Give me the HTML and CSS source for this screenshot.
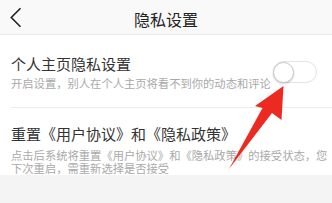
FILE: index.html
```html
<!DOCTYPE html>
<html lang="zh-CN">
<head>
<meta charset="utf-8">
<link rel="stylesheet" href="styles.css">
</head>
<body>
<div class="page">
  <header class="bar">
    <svg class="back" width="12" height="21" viewBox="0 0 12 21"><path d="M10.5 1.2 L1.3 10.5 L10.5 19.8" fill="none" stroke="#222" stroke-width="1.6"/></svg>
    <div class="bar-title">隐私设置</div>
  </header>
  <section class="list">
    <div class="item item-first">
      <div class="texts">
        <div class="title">个人主页隐私设置</div>
        <div class="desc">开启设置，别人在个人主页将看不到你的动态和评论</div>
      </div>
      <div class="switch"><span class="knob"></span></div>
    </div>
    <div class="item item-last">
      <div class="texts">
        <div class="title">重置《用户协议》和《隐私政策》</div>
        <div class="desc desc-wide">点击后系统将重置《用户协议》和《隐私政策》的接受状态，您下次重启，需重新选择是否接受</div>
      </div>
    </div>
  </section>
  <div class="rest"></div>
  <svg class="arrow" width="332" height="203" viewBox="0 0 332 203"><polygon points="283.5,86 281.5,120 272,113 229,169 262.5,108 255,106" fill="#ec2a22"/></svg>
</div>
</body>
</html>
```
FILE: styles.css
```css
html, body {
  margin: 0;
  padding: 0;
}
body {
  font-family: "Noto Sans CJK SC", "Noto Sans", sans-serif;
  background: #f4f4f4;
}
.page {
  position: relative;
  width: 332px;
  height: 203px;
  overflow: hidden;
  background: #f4f4f4;
}
.bar {
  height: 34px;
  background: #f9f9f9;
  border-bottom: 1px solid #e9e9e9;
  display: flex;
  align-items: center;
}
.back {
  margin-left: 10px;
}
.bar-title {
  flex: 1;
  text-align: center;
  font-size: 16px;
  line-height: 20px;
  color: #222;
  margin-left: -22px;
  padding-top: 4px;
}
.list {
  background: #fff;
  padding-left: 11px;
}
.item {
  display: flex;
  align-items: center;
}
.item-first {
  padding: 19px 15px 17px 0;
  border-bottom: 1px solid #ececec;
}
.item-last {
  padding: 16px 0 0 0;
}
.texts {
  flex: 1;
  min-width: 0;
}
.title {
  font-size: 15px;
  line-height: 20px;
  color: #333;
}
.desc {
  font-size: 11.3px;
  line-height: 13px;
  color: #a9a9a9;
  margin-top: 3px;
}
.desc-wide {
  margin-top: 5px;
}
.switch {
  width: 42px;
  height: 20px;
  border: 1px solid #e3e3e3;
  border-radius: 11px;
  background: #fff;
  display: flex;
  align-items: center;
}
.knob {
  width: 21px;
  height: 21px;
  border-radius: 50%;
  background: #fff;
  border: 1px solid #c9c9c9;
  box-shadow: 0 1px 2px rgba(0,0,0,0.2);
  margin-left: -1px;
  box-sizing: border-box;
}
.rest {
  height: 40px;
}
.arrow {
  position: absolute;
  left: 0;
  top: 0;
}
```
